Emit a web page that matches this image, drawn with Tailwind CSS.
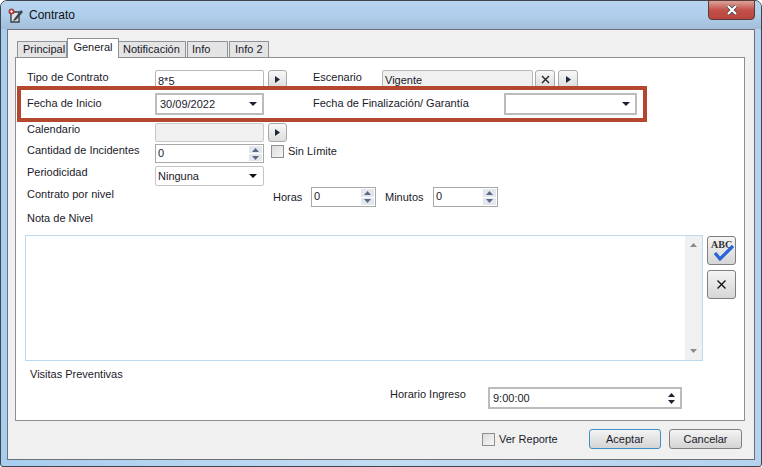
<!DOCTYPE html>
<html lang="es">
<head>
  <meta charset="UTF-8">
  <title>Contrato</title>
  <script src="https://cdn.jsdelivr.net/npm/@tailwindcss/browser@4"></script>
</head>
<body class="bg-white w-[762px] h-[467px] overflow-hidden font-['Liberation_Sans',sans-serif] text-[11px] leading-[14px] text-[#1a1a2a]">
  <!-- Window -->
  <div class="relative w-[762px] h-[467px] rounded-t-[7px] rounded-b-[3px] border border-[#3f4650] bg-gradient-to-r from-[#a8cdee] via-[#c4dcf2] to-[#b5d3ee] flex flex-col">
    <!-- Title bar -->
    <div class="h-[28px] shrink-0 flex items-center pl-[7px] bg-gradient-to-b from-[#b8d5f0] via-[#afcfec] to-[#a3bdd8] rounded-t-[6px]">
      <svg class="w-[17px] h-[17px]" viewBox="0 0 17 17">
        <path d="M3 5h8v10H3z" fill="#dfe3e7" stroke="#3a3f46" stroke-width="1.400"/>
        <path d="M6 12l7-9 2 2-7 8-3 1z" fill="#3e444c"/>
        <circle cx="3.500" cy="4.500" r="2.600" fill="#d8383c" stroke="#8a2024" stroke-width=".7"/>
        <path d="M2 4.500h3M3.500 3v3" stroke="#fff" stroke-width=".8"/>
      </svg>
      <span class="ml-[4px] text-[12px] text-[#111]">Contrato</span>
    </div>
    <div class="absolute top-[-1px] right-[6px] w-[47px] h-[20px] rounded-b-[4px] border border-[#5b3a3a] bg-gradient-to-b from-[#d9a49a] via-[#c4504a] to-[#b8443e] flex items-center justify-center">
      <svg class="w-[12px] h-[10px]" viewBox="0 0 12 10"><path d="M2 1l8 8M10 1L2 9" stroke="#3c4650" stroke-width="3.600"/><path d="M2 1l8 8M10 1L2 9" stroke="#fff" stroke-width="2.200"/></svg>
    </div>

    <!-- Client area -->
    <div class="ml-[6px] w-[748px] h-[431px] border border-[#6d7278] bg-[#f0f0f0] flex flex-col">
      <!-- Tabs -->
      <div class="h-[27px] pl-[9px] flex items-end">
        <div class="w-[50px] h-[16px] border border-b-0 border-[#8f9298] bg-[#e4e4e4] pl-[5px]">Principal</div>
        <div class="w-[52px] h-[20px] border border-b-0 border-[#8f9298] bg-white text-center pt-[1px] relative top-[1px] z-10">General</div>
        <div class="w-[67px] h-[16px] border border-b-0 border-l-0 border-[#8f9298] bg-[#e4e4e4] pl-[4px]">Notificación</div>
        <div class="w-[41px] h-[16px] border border-b-0 border-[#8f9298] bg-[#e4e4e4] pl-[4px] ml-[1px]">Info</div>
        <div class="w-[40px] h-[16px] border border-b-0 border-[#8f9298] bg-[#e4e4e4] pl-[5px] ml-[1px]">Info 2</div>
      </div>

      <!-- Tab page -->
      <div class="relative ml-[7px] w-[730px] h-[364px] border border-[#8b8e94] bg-white">
        <!-- Highlight annotation -->
        <div class="absolute left-[1px] top-[28px] w-[630px] h-[36px] border-[4px] border-[#b5472f] z-10"></div>

        <div class="flex h-[18px] mt-[12px]">
          <span class="w-[139px] pl-[11px]">Tipo de Contrato</span>
          <div class="w-[109px] border border-[#b8b8b8] rounded-[2px] px-[2px] pt-[3px] bg-white">8*5</div>
          <button class="ml-[4px] w-[19px] border border-[#a9a9a9] rounded-[3px] bg-gradient-to-b from-[#f8f8f8] to-[#dedede] flex items-center justify-center"><svg class="w-[5px] h-[7px]" viewBox="0 0 5 7"><path d="M0 0l5 3.500-5 3.500z" fill="#1e2a3a"/></svg></button>
          <span class="ml-[26px] w-[69px]">Escenario</span>
          <div class="w-[151px] border border-[#b8b8b8] rounded-[2px] px-[2px] pt-[2px] bg-[#f0f0f0]">Vigente</div>
          <button class="ml-[2px] w-[20px] border border-[#a9a9a9] rounded-[3px] bg-gradient-to-b from-[#f8f8f8] to-[#dedede] flex items-center justify-center"><svg class="w-[9px] h-[9px]" viewBox="0 0 9 9"><path d="M1 1l7 7M8 1L1 8" stroke="#1c2530" stroke-width="1.400"/></svg></button>
          <button class="ml-[3px] w-[20px] border border-[#a9a9a9] rounded-[3px] bg-gradient-to-b from-[#f8f8f8] to-[#dedede] flex items-center justify-center"><svg class="w-[5px] h-[7px]" viewBox="0 0 5 7"><path d="M0 0l5 3.500-5 3.500z" fill="#1e2a3a"/></svg></button>
        </div>

        <div class="flex h-[22px] mt-[5px]">
          <span class="w-[139px] pl-[11px] pt-[3px]">Fecha de Inicio</span>
          <div class="w-[109px] border-2 border-[#bcbcbc] flex items-center justify-between pl-[3px] pr-[5px]">30/09/2022<svg class="w-[8px] h-[4px]" viewBox="0 0 8 4"><path d="M0 0h8L4 4z" fill="#1a2230"/></svg></div>
          <span class="ml-[49px] w-[191px] pt-[3px]">Fecha de Finalización/ Garantía</span>
          <div class="w-[133px] border-2 border-[#bcbcbc] flex items-center justify-end pr-[5px]"><svg class="w-[8px] h-[4px]" viewBox="0 0 8 4"><path d="M0 0h8L4 4z" fill="#1a2230"/></svg></div>
        </div>

        <div class="flex h-[19px] mt-[8px]">
          <span class="w-[139px] pl-[11px] -mt-[1px]">Calendario</span>
          <div class="w-[109px] border border-[#c8c8c8] rounded-[2px] bg-[#f0f0f0]"></div>
          <button class="ml-[4px] w-[19px] border border-[#a9a9a9] rounded-[3px] bg-gradient-to-b from-[#f8f8f8] to-[#dedede] flex items-center justify-center"><svg class="w-[5px] h-[7px]" viewBox="0 0 5 7"><path d="M0 0l5 3.500-5 3.500z" fill="#1e2a3a"/></svg></button>
        </div>

        <div class="flex h-[19px] mt-[2px]">
          <span class="w-[139px] pl-[11px] -mt-[1px]">Cantidad de Incidentes</span>
          <div class="w-[109px] border border-[#a8a8a8] flex justify-between pl-[2px] pt-[1px]">0
            <div class="w-[15px] -mt-[1px] flex flex-col gap-[1px] p-[1px]">
              <div class="flex-1 bg-[#e4e8ee] flex items-center justify-center"><svg class="w-[7px] h-[4px]" viewBox="0 0 7 4"><path d="M3.500 0L7 4H0z" fill="#5a6a82"/></svg></div>
              <div class="flex-1 bg-[#e4e8ee] flex items-center justify-center"><svg class="w-[7px] h-[4px]" viewBox="0 0 7 4"><path d="M0 0h7L3.500 4z" fill="#5a6a82"/></svg></div>
            </div>
          </div>
          <div class="ml-[7px] mt-[1px] w-[13px] h-[13px] border border-[#8e8f8f] bg-gradient-to-br from-[#dcdcdc] to-[#f6f6f6]"></div>
          <span class="ml-[4px]">Sin Límite</span>
        </div>

        <div class="flex h-[20px] mt-[3px]">
          <span class="w-[139px] pl-[11px] -mt-[1px]">Periodicidad</span>
          <div class="w-[109px] border border-[#c4c4c4] rounded-[2px] flex items-center justify-between pl-[2px] pr-[6px]">Ninguna<svg class="w-[8px] h-[4px]" viewBox="0 0 8 4"><path d="M0 0h8L4 4z" fill="#111"/></svg></div>
        </div>

        <div class="flex h-[20px] mt-[1px]">
          <span class="w-[257px] pl-[11px]">Contrato por nivel</span>
          <span class="w-[38px] pt-[3px]">Horas</span>
          <div class="w-[65px] border border-[#a8a8a8] flex justify-between pl-[2px] pt-[1px]">0
            <div class="w-[15px] -mt-[1px] flex flex-col gap-[1px] p-[1px]">
              <div class="flex-1 bg-[#e4e8ee] flex items-center justify-center"><svg class="w-[7px] h-[4px]" viewBox="0 0 7 4"><path d="M3.500 0L7 4H0z" fill="#5a6a82"/></svg></div>
              <div class="flex-1 bg-[#e4e8ee] flex items-center justify-center"><svg class="w-[7px] h-[4px]" viewBox="0 0 7 4"><path d="M0 0h7L3.500 4z" fill="#5a6a82"/></svg></div>
            </div>
          </div>
          <span class="ml-[9px] w-[48px] pt-[3px]">Minutos</span>
          <div class="w-[65px] border border-[#a8a8a8] flex justify-between pl-[2px] pt-[1px]">0
            <div class="w-[15px] -mt-[1px] flex flex-col gap-[1px] p-[1px]">
              <div class="flex-1 bg-[#e4e8ee] flex items-center justify-center"><svg class="w-[7px] h-[4px]" viewBox="0 0 7 4"><path d="M3.500 0L7 4H0z" fill="#5a6a82"/></svg></div>
              <div class="flex-1 bg-[#e4e8ee] flex items-center justify-center"><svg class="w-[7px] h-[4px]" viewBox="0 0 7 4"><path d="M0 0h7L3.500 4z" fill="#5a6a82"/></svg></div>
            </div>
          </div>
        </div>

        <div class="h-[14px] mt-[4px] pl-[11px]">Nota de Nivel</div>

        <div class="flex mt-[10px] ml-[9px]">
          <div class="w-[678px] h-[126px] border border-[#bcd9ee] flex justify-end">
            <div class="w-[17px] bg-[#f0f0f0] flex flex-col items-center justify-between py-[7px]">
              <svg class="w-[7px] h-[4px]" viewBox="0 0 7 4"><path d="M3.500 0L7 4H0z" fill="#8a8a8a"/></svg>
              <svg class="w-[7px] h-[4px]" viewBox="0 0 7 4"><path d="M0 0h7L3.500 4z" fill="#8a8a8a"/></svg>
            </div>
          </div>
          <div class="ml-[4px] flex flex-col gap-[5px] pt-[1px]">
            <button class="relative w-[29px] h-[29px] border border-[#7f7f7f] rounded-[3px] bg-gradient-to-b from-[#f4f4f4] to-[#d6d6d6] overflow-hidden">
              <span class="absolute left-[3px] top-[3px] font-['Liberation_Serif',serif] font-bold text-[10px] leading-[10px] text-[#333]">ABC</span>
              <svg class="absolute left-[5px] top-[7px] w-[22px] h-[18px]" viewBox="0 0 22 18"><path d="M2 9l5 6L20 2" fill="none" stroke="#2c62d8" stroke-width="3.200"/></svg>
            </button>
            <button class="w-[29px] h-[29px] border border-[#7f7f7f] rounded-[3px] bg-gradient-to-b from-[#f4f4f4] to-[#d6d6d6] flex items-center justify-center"><svg class="w-[9px] h-[9px]" viewBox="0 0 9 9"><path d="M.5.500l8 8M8.500.500l-8 8" stroke="#111" stroke-width="1.300"/></svg></button>
          </div>
        </div>

        <div class="h-[14px] mt-[6px] pl-[14px]">Visitas Preventivas</div>

        <div class="flex h-[22px] mt-[6px] pl-[374px]">
          <span class="w-[98px]">Horario Ingreso</span>
          <div class="w-[194px] border-2 border-[#bcbcbc] flex items-center justify-between pl-[3px] pr-[5px]">9:00:00
            <div class="flex flex-col gap-[3px]">
              <svg class="w-[7px] h-[4px]" viewBox="0 0 7 4"><path d="M3.500 0L7 4H0z" fill="#1a2230"/></svg>
              <svg class="w-[7px] h-[4px]" viewBox="0 0 7 4"><path d="M0 0h7L3.500 4z" fill="#1a2230"/></svg>
            </div>
          </div>
        </div>
      </div>

      <!-- Footer -->
      <div class="flex items-center h-[20px] mt-[8px] pl-[474px]">
        <div class="w-[13px] h-[13px] border border-[#8e8f8f] bg-gradient-to-br from-[#dcdcdc] to-[#f6f6f6]"></div>
        <span class="ml-[4px] w-[90px]">Ver Reporte</span>
        <button class="w-[72px] h-[20px] border border-[#3c90c4] rounded-[3px] bg-gradient-to-b from-[#f4f4f4] to-[#d4d4d4] text-[11px]">Aceptar</button>
        <button class="ml-[8px] w-[73px] h-[20px] border border-[#7f7f7f] rounded-[3px] bg-gradient-to-b from-[#f4f4f4] to-[#d4d4d4] text-[11px]">Cancelar</button>
      </div>
    </div>
  </div>
</body>
</html>
